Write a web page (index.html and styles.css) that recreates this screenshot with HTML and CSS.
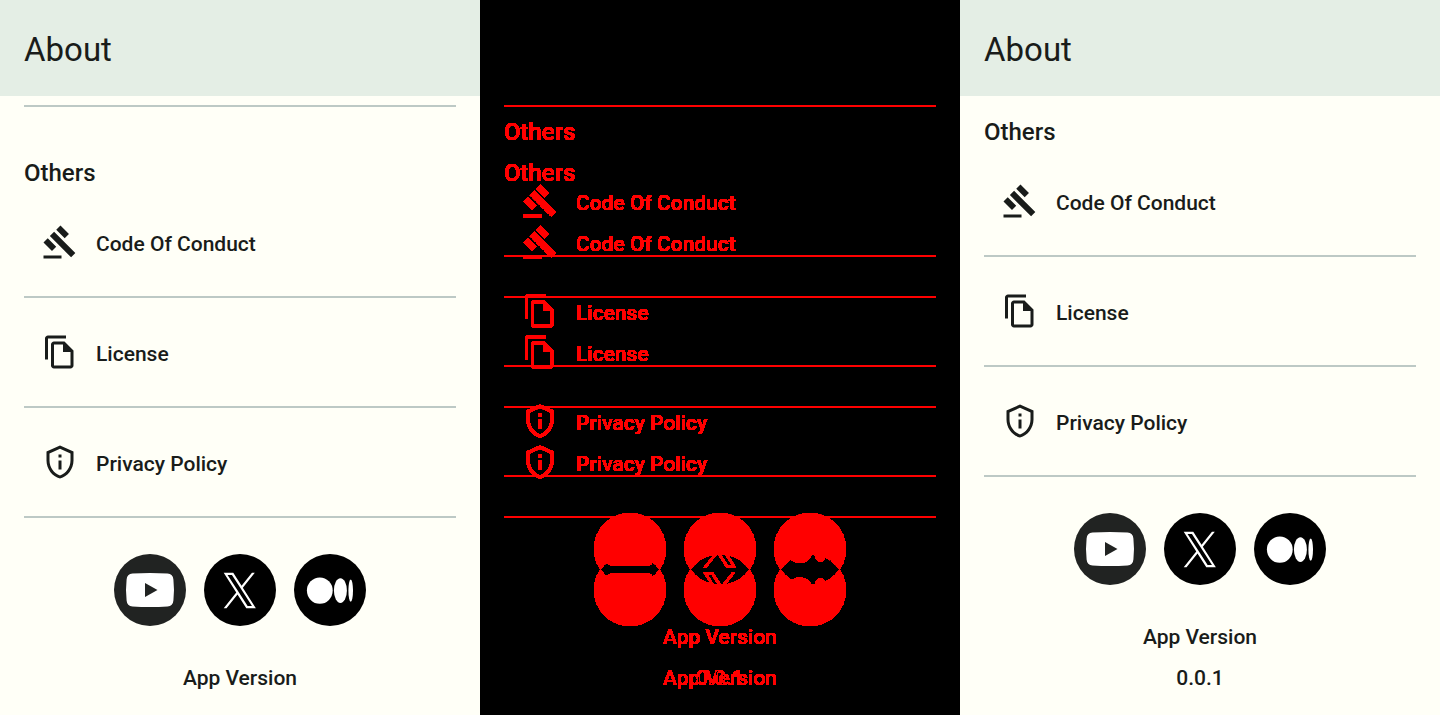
FILE: index.html
```html
<!DOCTYPE html>
<html lang="en">
<head>
<meta charset="utf-8">
<meta name="viewport" content="width=device-width, initial-scale=1">
<title>About</title>
<link rel="stylesheet" href="styles.css">
</head>
<body>
<svg class="defs" width="0" height="0" aria-hidden="true">
  <symbol id="gavel" viewBox="0 0 24 24"><path d="M1 21h12v2H1zM5.245 8.07l2.83-2.827 14.14 14.142-2.828 2.828zM12.317 1l5.657 5.656-2.83 2.83-5.654-5.66zM3.825 9.485l5.657 5.657-2.828 2.828-5.657-5.657z"/></symbol>
  <symbol id="copy" viewBox="0 0 24 24"><path d="M16 1H4c-1.1 0-2 .9-2 2v14h2V3h12V1zm-1 4H8c-1.1 0-1.99.9-1.99 2L6 21c0 1.1.89 2 1.99 2H19c1.1 0 2-.9 2-2V11l-6-6zM8 21V7h6v5h5v9H8z"/></symbol>
  <symbol id="privacy" viewBox="0 0 24 24"><path d="M12 3.19l7 3.11V11c0 4.52-2.98 8.69-7 9.93C7.98 19.69 5 15.52 5 11V6.3l7-3.11M12 1L3 5v6c0 5.55 3.84 10.74 9 12 5.16-1.26 9-6.45 9-12V5l-9-4zM11 7h2v2h-2V7zm0 4h2v6h-2v-6z"/></symbol>
  <symbol id="youtube" viewBox="0 0 72 72"><circle cx="36" cy="36" r="36" fill="#212322"/><path fill="#fff" d="M18.500 19.600Q36 18.400 53.500 19.600Q59 20 59.400 25.500Q60.600 36 59.400 46.500Q59 52 53.500 52.400Q36 53.600 18.500 52.400Q13 52 12.600 46.500Q11.400 36 12.600 25.500Q13 20 18.500 19.600z"/><path fill="#212322" d="M31 29l12.500 7L31 43z"/></symbol>
  <symbol id="x-logo" viewBox="0 0 72 72"><circle cx="36" cy="36" r="36"/><path fill="#fff" transform="translate(19.700 18.700) scale(.0268 .0289)" d="M714.163 519.284L1160.89 0H1055.03L667.137 450.887L357.328 0H0L468.492 681.821L0 1226.37H105.866L515.491 750.218L842.672 1226.37H1200L714.137 519.284H714.163ZM569.165 687.828L521.697 619.934L144.011 79.694H306.615L611.412 515.685L658.88 583.579L1055.08 1150.3H892.476L569.165 687.854V687.828Z"/></symbol>
  <symbol id="medium" viewBox="0 0 72 72"><circle cx="36" cy="36" r="36"/><g fill="#fff"><ellipse cx="25.800" cy="36.600" rx="12.900" ry="13.200"/><ellipse cx="46.400" cy="36.600" rx="6.500" ry="12.400"/><ellipse cx="56.700" cy="36.600" rx="2.300" ry="11.200"/></g></symbol>
  <filter id="changed" x="0" y="0" width="1" height="1" color-interpolation-filters="sRGB">
    <feColorMatrix values="60 60 60 0 -0.7  0 0 0 0 0  0 0 0 0 0  0 0 0 0 1"/>
  </filter>
</svg>

<main class="board">
  <section class="screen">
    <header class="bar"><h1 class="title">About</h1></header>
    <hr class="rule">
    <div class="section after-rule">
      <h2 class="heading">Others</h2>
      <nav class="list">
        <a class="row" href="#conduct"><svg class="icon"><use href="#gavel"/></svg><span class="label">Code Of Conduct</span></a>
        <a class="row" href="#license"><svg class="icon"><use href="#copy"/></svg><span class="label">License</span></a>
        <a class="row" href="#policy"><svg class="icon"><use href="#privacy"/></svg><span class="label">Privacy Policy</span></a>
      </nav>
    </div>
    <footer class="footer">
      <div class="social">
        <a class="badge" href="#yt" aria-label="YouTube"><svg class="logo"><use href="#youtube"/></svg></a>
        <a class="badge" href="#tw" aria-label="X"><svg class="logo"><use href="#x-logo"/></svg></a>
        <a class="badge" href="#md" aria-label="Medium"><svg class="logo"><use href="#medium"/></svg></a>
      </div>
      <p class="version">App Version</p>
    </footer>
  </section>

  <div class="diff" inert>
    <section class="screen layer">
      <header class="bar"><h1 class="title">About</h1></header>
      <hr class="rule">
      <div class="section after-rule">
        <h2 class="heading">Others</h2>
        <nav class="list">
          <a class="row" href="#conduct"><svg class="icon"><use href="#gavel"/></svg><span class="label">Code Of Conduct</span></a>
          <a class="row" href="#license"><svg class="icon"><use href="#copy"/></svg><span class="label">License</span></a>
          <a class="row" href="#policy"><svg class="icon"><use href="#privacy"/></svg><span class="label">Privacy Policy</span></a>
        </nav>
      </div>
      <footer class="footer">
        <div class="social">
          <a class="badge" href="#yt" aria-label="YouTube"><svg class="logo"><use href="#youtube"/></svg></a>
          <a class="badge" href="#tw" aria-label="X"><svg class="logo"><use href="#x-logo"/></svg></a>
          <a class="badge" href="#md" aria-label="Medium"><svg class="logo"><use href="#medium"/></svg></a>
        </div>
        <p class="version">App Version</p>
      </footer>
    </section>
    <section class="screen layer">
      <header class="bar"><h1 class="title">About</h1></header>
      <div class="section">
        <h2 class="heading">Others</h2>
        <nav class="list">
          <a class="row" href="#conduct"><svg class="icon"><use href="#gavel"/></svg><span class="label">Code Of Conduct</span></a>
          <a class="row" href="#license"><svg class="icon"><use href="#copy"/></svg><span class="label">License</span></a>
          <a class="row" href="#policy"><svg class="icon"><use href="#privacy"/></svg><span class="label">Privacy Policy</span></a>
        </nav>
      </div>
      <footer class="footer">
        <div class="social">
          <a class="badge" href="#yt" aria-label="YouTube"><svg class="logo"><use href="#youtube"/></svg></a>
          <a class="badge" href="#tw" aria-label="X"><svg class="logo"><use href="#x-logo"/></svg></a>
          <a class="badge" href="#md" aria-label="Medium"><svg class="logo"><use href="#medium"/></svg></a>
        </div>
        <p class="version">App Version</p>
        <p class="version">0.0.1</p>
      </footer>
    </section>
  </div>

  <section class="screen">
    <header class="bar"><h1 class="title">About</h1></header>
    <div class="section">
      <h2 class="heading">Others</h2>
      <nav class="list">
        <a class="row" href="#conduct"><svg class="icon"><use href="#gavel"/></svg><span class="label">Code Of Conduct</span></a>
        <a class="row" href="#license"><svg class="icon"><use href="#copy"/></svg><span class="label">License</span></a>
        <a class="row" href="#policy"><svg class="icon"><use href="#privacy"/></svg><span class="label">Privacy Policy</span></a>
      </nav>
    </div>
    <footer class="footer">
      <div class="social">
        <a class="badge" href="#yt" aria-label="YouTube"><svg class="logo"><use href="#youtube"/></svg></a>
        <a class="badge" href="#tw" aria-label="X"><svg class="logo"><use href="#x-logo"/></svg></a>
        <a class="badge" href="#md" aria-label="Medium"><svg class="logo"><use href="#medium"/></svg></a>
      </div>
      <p class="version">App Version</p>
      <p class="version">0.0.1</p>
    </footer>
  </section>
</main>
</body>
</html>
```
FILE: styles.css
```css
* {
  box-sizing: border-box;
}

body,
h1,
h2,
p {
  margin: 0;
}

body {
  font-family: Roboto, "Liberation Sans", sans-serif;
  font-size: 21px;
  font-weight: 500;
  color: #191c1a;
  background: #fffff7;
}

.defs {
  position: absolute;
}

.board {
  display: grid;
  grid-template-columns: repeat(3, minmax(0, 1fr));
  min-height: 100vh;
}

.screen {
  background: #fffff7;
}

/* Two screens stacked; pixels that differ between them turn red. */
.diff {
  display: grid;
  isolation: isolate;
  background: #000;
  filter: url(#changed);
}

.layer {
  grid-area: 1 / 1;
  mix-blend-mode: difference;
}

.bar {
  display: flex;
  align-items: center;
  height: 96px;
  padding: 4px 24px 0;
  background: #e4eee5;
}

.title {
  font-size: 33px;
  font-weight: 400;
  line-height: 42px;
}

.rule {
  height: 2px;
  margin: 9px 24px 0;
  border: 0;
  background: #bdc9c5;
}

.section {
  padding: 21px 24px 0;
}

.after-rule {
  padding-top: 51px;
}

.heading {
  font-size: 24px;
  font-weight: 500;
  line-height: 30px;
}

.row {
  display: flex;
  align-items: center;
  gap: 18px;
  height: 110px;
  padding: 0 18px;
  border-bottom: 2px solid #bdc9c5;
  color: inherit;
  text-decoration: none;
}

.icon {
  width: 36px;
  height: 36px;
  fill: currentColor;
}

.label {
  padding-top: 4px;
}

.footer {
  display: flex;
  flex-direction: column;
  align-items: center;
  gap: 12px;
  padding-top: 36px;
}

.social {
  display: flex;
  gap: 18px;
  margin-bottom: 26px;
}

.badge,
.logo {
  display: block;
  width: 72px;
  height: 72px;
}

.version {
  line-height: 29px;
}
```
